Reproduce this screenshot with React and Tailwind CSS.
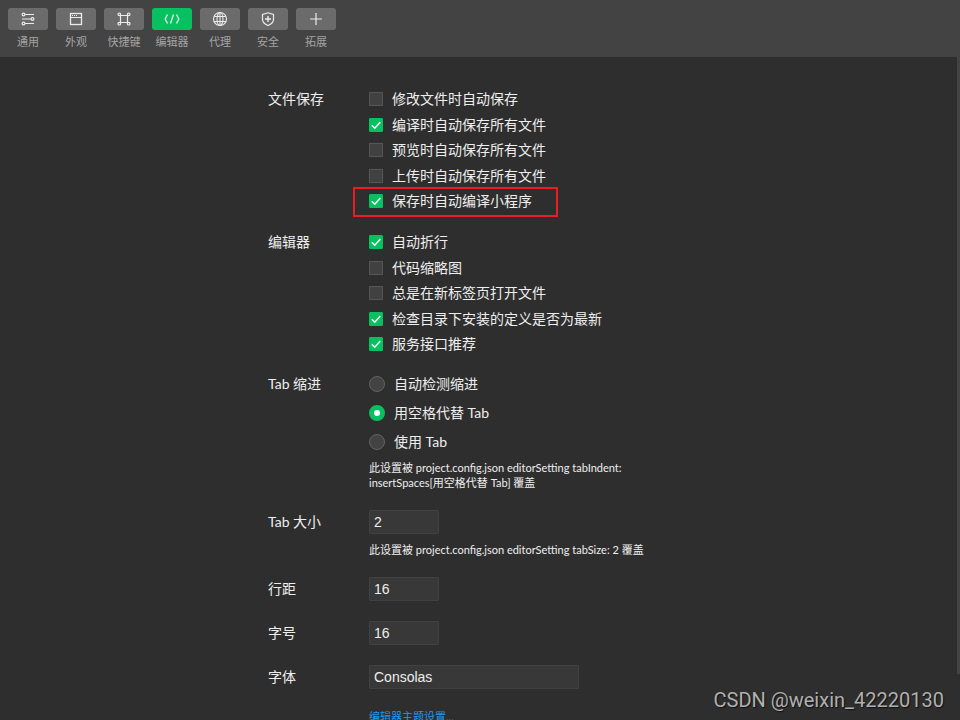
import React, { useState } from 'react'

const stroke = { fill: 'none', stroke: 'currentColor', strokeWidth: 1 }

const icons = {
  general: (
    <g {...stroke} strokeWidth="1.2">
      <circle cx="3.5" cy="3.5" r="1.4" />
      <path d="M5 3.500h9M2 8h9M5 12.500h9" />
      <circle cx="12.5" cy="8" r="1.4" />
      <circle cx="3.5" cy="12.5" r="1.4" />
    </g>
  ),
  appearance: (
    <g {...stroke}>
      <rect x="2.5" y="2.5" width="11" height="11" strokeWidth="1.3" />
      <path d="M2.500 6.500h11" />
      <path d="M4 4.500h1M6 4.500h1M8 4.500h1" />
    </g>
  ),
  shortcut: (
    <g {...stroke} strokeWidth="1.2">
      <circle cx="3.3" cy="3.3" r="1.3" />
      <circle cx="12.7" cy="3.3" r="1.3" />
      <circle cx="3.3" cy="12.7" r="1.3" />
      <circle cx="12.7" cy="12.7" r="1.3" />
      <path d="M4.500 4.500h7v7h-7z" />
    </g>
  ),
  editor: (
    <g {...stroke} strokeWidth="1.3">
      <path d="M3.500 3.500 1.200 8l2.300 4.500M12.500 3.500 14.800 8l-2.300 4.500M9.500 3.500 6.500 12.500" />
    </g>
  ),
  proxy: (
    <g {...stroke} strokeWidth="1.1">
      <circle cx="8" cy="8" r="6.5" />
      <ellipse cx="8" cy="8" rx="3" ry="6.5" />
      <path d="M8 1.500v13M2.200 5.500h11.600M2.200 10.500h11.600" />
    </g>
  ),
  security: (
    <g {...stroke} strokeWidth="1.2">
      <path d="M8 1.800 13.500 3.500v4.800c0 3-2.500 5-5.500 6.200-3-1.200-5.500-3.200-5.500-6.200V3.500z" />
      <path d="M8 5v6M5 8h6" strokeWidth="1.4" />
    </g>
  ),
  extend: (
    <g {...stroke} strokeWidth="1.2">
      <path d="M8 2v12M2 8h12" />
    </g>
  ),
}

const tabs = [
  { id: 'general', label: '通用' },
  { id: 'appearance', label: '外观' },
  { id: 'shortcut', label: '快捷键' },
  { id: 'editor', label: '编辑器' },
  { id: 'proxy', label: '代理' },
  { id: 'security', label: '安全' },
  { id: 'extend', label: '拓展' },
]

const saveOptions = [
  { label: '修改文件时自动保存', checked: false },
  { label: '编译时自动保存所有文件', checked: true },
  { label: '预览时自动保存所有文件', checked: false },
  { label: '上传时自动保存所有文件', checked: false },
  { label: '保存时自动编译小程序', checked: true, marked: true },
]

const editorOptions = [
  { label: '自动折行', checked: true },
  { label: '代码缩略图', checked: false },
  { label: '总是在新标签页打开文件', checked: false },
  { label: '检查目录下安装的定义是否为最新', checked: true },
  { label: '服务接口推荐', checked: true },
]

const indentOptions = ['自动检测缩进', '用空格代替 Tab', '使用 Tab']

function Toolbar({ active, onSelect }) {
  return (
    <nav className="flex h-[57px] shrink-0 gap-2 bg-[#434343] px-2 pt-2">
      {tabs.map((tab) => (
        <button
          key={tab.id}
          onClick={() => onSelect(tab.id)}
          className="flex w-10 flex-col items-center gap-1 text-[11px] leading-4 text-[#a3a3a3]"
        >
          <span
            className={`flex h-[22px] w-10 items-center justify-center rounded-[3px] text-[#ececec] ${
              active === tab.id ? 'bg-[#07c160]' : 'bg-[#6b6b6b]'
            }`}
          >
            <svg viewBox="0 0 16 16" className="size-4">{icons[tab.id]}</svg>
          </span>
          <span className="whitespace-nowrap">{tab.label}</span>
        </button>
      ))}
    </nav>
  )
}

function CheckRow({ label, checked, marked }) {
  return (
    <label className="relative flex items-center gap-[9px] self-start leading-5">
      <span className="grid size-[14px] place-items-center">
        <input
          type="checkbox"
          defaultChecked={checked}
          className="peer col-start-1 row-start-1 size-[14px] appearance-none border border-[#555555] bg-[#414141] checked:rounded-[1px] checked:border-[#07c160] checked:bg-[#07c160]"
        />
        <svg
          viewBox="0 0 14 14"
          className="pointer-events-none invisible col-start-1 row-start-1 size-[14px] peer-checked:visible"
        >
          <path d="M2.800 7.200 5.800 10.200 11.300 4" fill="none" stroke="white" strokeWidth="1.500" />
        </svg>
      </span>
      {label}
      {marked && (
        <span className="absolute -top-1 -right-[26px] -bottom-[6px] -left-4 border-2 border-[#ed1c24]" />
      )}
    </label>
  )
}

function CheckList({ options }) {
  return (
    <div className="flex h-[122px] flex-col justify-between">
      {options.map((option) => (
        <CheckRow key={option.label} {...option} />
      ))}
    </div>
  )
}

function Section({ title, children }) {
  return (
    <section className="grid grid-cols-[101px_1fr]">
      <h2 className="leading-5">{title}</h2>
      <div>{children}</div>
    </section>
  )
}

function FieldSection({ title, value, wide, children }) {
  return (
    <section className="grid grid-cols-[101px_1fr]">
      <label htmlFor={title} className="h-6 leading-6">{title}</label>
      <div>
        <input
          id={title}
          type="text"
          defaultValue={value}
          className={`block h-6 rounded-[1px] border border-[#414141] bg-[#383838] px-1 font-['Liberation_Sans',sans-serif] text-sm text-[#eeeeee] ${
            wide ? 'w-[210px]' : 'w-[70px]'
          }`}
        />
        {children}
      </div>
    </section>
  )
}

export default function App() {
  const [active, setActive] = useState('editor')

  return (
    <div className="relative flex h-screen flex-col overflow-hidden bg-[#2e2e2e] font-[Lato,'Noto_Sans_CJK_SC',sans-serif] text-sm text-[#eeeeee]">
      <Toolbar active={active} onSelect={setActive} />
      <div className="flex min-h-0 flex-1">
        <main className="min-w-0 flex-1 overflow-hidden pt-8 pl-[3px]">
          <div className="mx-auto flex w-[424px] flex-col gap-5">
            <Section title="文件保存">
              <CheckList options={saveOptions} />
            </Section>
            <div className="mt-px">
              <Section title="编辑器">
                <CheckList options={editorOptions} />
              </Section>
            </div>
            <Section title="Tab 缩进">
              <div className="flex flex-col gap-[9px]">
                {indentOptions.map((option, i) => (
                  <label key={option} className="flex items-center gap-[9px] self-start leading-5">
                    <input
                      type="radio"
                      name="indent"
                      defaultChecked={i === 1}
                      className="size-4 appearance-none rounded-full border border-[#636363] bg-[#434343] checked:border-[5px] checked:border-[#07c160] checked:bg-white"
                    />
                    {option}
                  </label>
                ))}
              </div>
              <p className="mt-2 text-[11px] leading-[15px] whitespace-nowrap">
                此设置被 project.config.json editorSetting tabIndent:
                <br />
                insertSpaces[用空格代替 Tab] 覆盖
              </p>
            </Section>
            <FieldSection title="Tab 大小" value="2">
              <p className="mt-2 text-[11px] leading-[15px] whitespace-nowrap">
                此设置被 project.config.json editorSetting tabSize: 2 覆盖
              </p>
            </FieldSection>
            <FieldSection title="行距" value="16" />
            <FieldSection title="字号" value="16" />
            <FieldSection title="字体" value="Consolas" wide>
              <a href="#theme" className="mt-5 block text-[11px] leading-[15px] text-[#1b9af7]">
                编辑器主题设置...
              </a>
            </FieldSection>
          </div>
        </main>
        <div className="w-[3px]">
          <div className="h-[93%] bg-[#434343]" />
        </div>
      </div>
      <div className="absolute right-4 bottom-2 font-[Roboto,sans-serif] text-xl leading-6 text-[#b0b0b0] [text-shadow:1px_1px_1px_#111111]">
        CSDN @weixin_42220130
      </div>
    </div>
  )
}
